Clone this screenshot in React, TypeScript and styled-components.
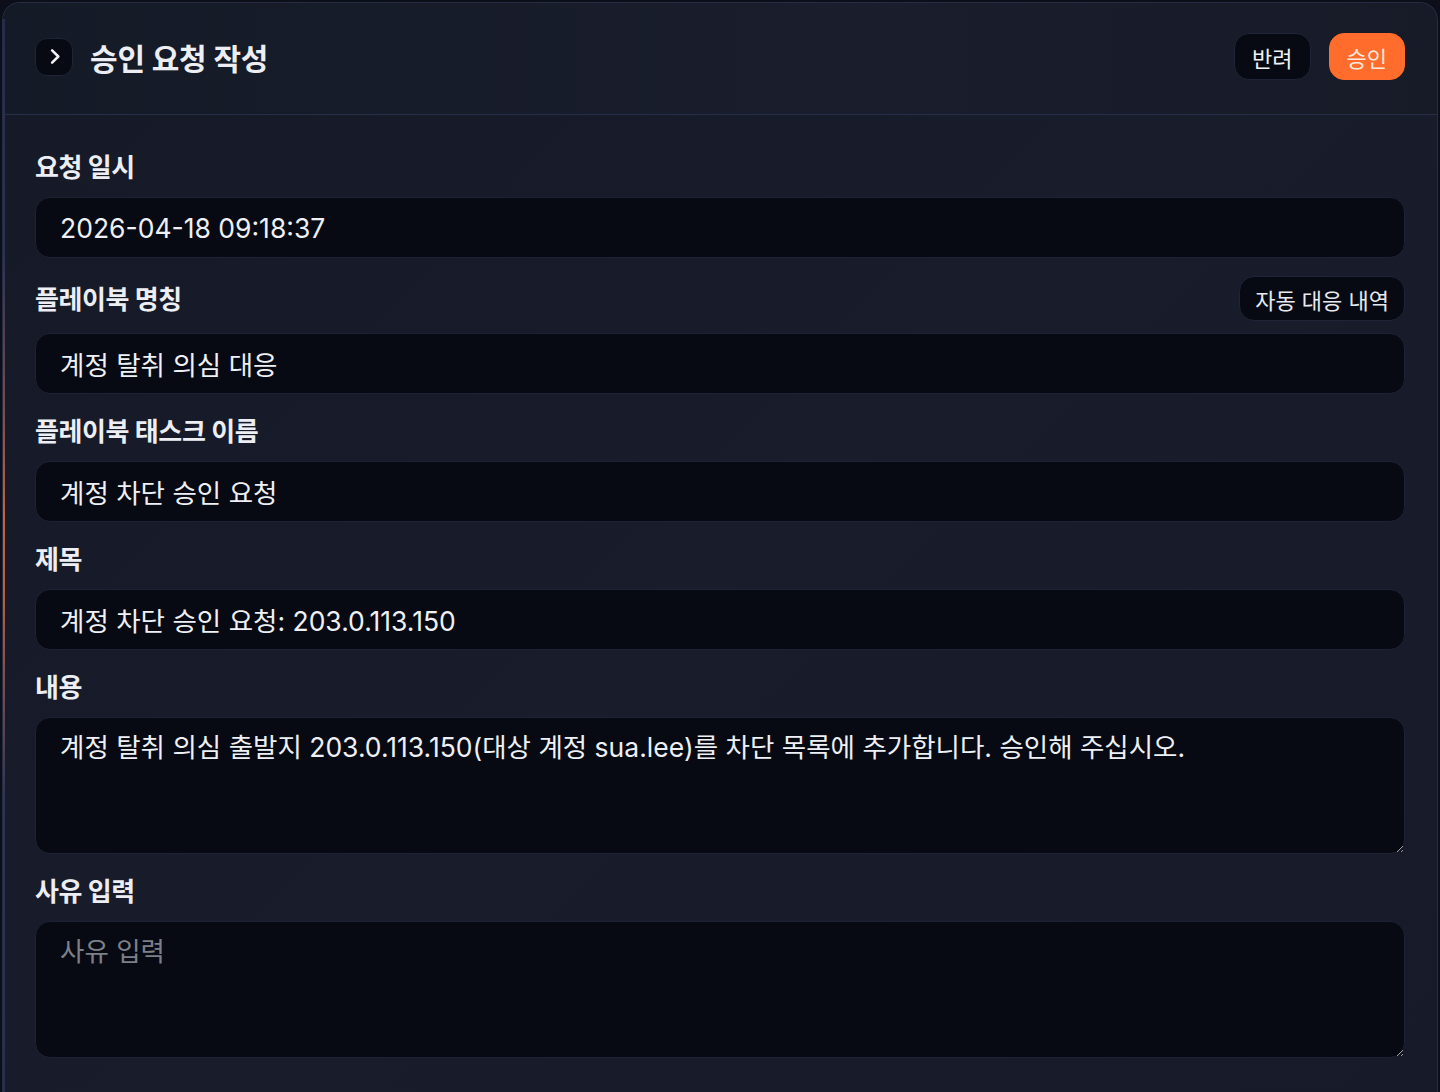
import styled, { createGlobalStyle } from "styled-components";

const GlobalStyle = createGlobalStyle`
  html, body {
    margin: 0;
    padding: 0;
    background: #0c0f19;
  }
  body {
    font-family: "Inter", "Noto Sans CJK KR", sans-serif;
    color: #eef0f5;
  }
  * { box-sizing: border-box; }
`;

const Panel = styled.section`
  position: relative;
  margin: 2px 2px 0 2px;
  min-height: calc(100vh - 2px);
  border: 1px solid #262c42;
  border-bottom: none;
  border-radius: 18px 18px 0 0;
  background: linear-gradient(135deg, #161a27 0%, #181c2b 50%, #171b29 100%);
  overflow: hidden;

  /* accent edge on the left */
  &::before {
    content: "";
    position: absolute;
    left: -1px;
    top: 16px;
    bottom: 0;
    width: 3px;
    background: linear-gradient(
      180deg,
      #262d4c 0%,
      #2c3256 22%,
      #7a4c4c 36%,
      #c8623a 46%,
      #c05e3c 53%,
      #7a4c4e 62%,
      #2d3456 72%,
      #283050 100%
    );
  }

  &::after {
    content: "";
    position: absolute;
    left: 40px;
    right: 200px;
    top: -1px;
    height: 1px;
    background: linear-gradient(90deg, transparent, #5a6388 40%, #4a5274 70%, transparent);
  }
`;

const Header = styled.header`
  display: flex;
  align-items: center;
  justify-content: space-between;
  height: 112px;
  padding: 0 32px 4px 32px;
  border-bottom: 1px solid #272e48;
  background: linear-gradient(90deg, #151a27 0%, #1a1e2c 60%, #171b28 100%);
`;

const TitleGroup = styled.div`
  display: flex;
  align-items: center;
  gap: 17px;
`;

const IconButton = styled.button`
  width: 38px;
  height: 38px;
  display: grid;
  place-items: center;
  border-radius: 12px;
  border: 1px solid #1f2537;
  background: #070a12;
  color: #f2f3f7;
  padding: 0;
  cursor: pointer;
`;

const Title = styled.h1`
  margin: 0;
  font-size: 30px;
  font-weight: 700;
  letter-spacing: -0.2px;
  color: #eceef3;
`;

const Actions = styled.div`
  display: flex;
  gap: 18px;
`;

const ActionButton = styled.button<{ $primary?: boolean }>`
  height: 47px;
  padding: 0 17px;
  border-radius: 15px;
  font-family: inherit;
  font-size: 22px;
  font-weight: 400;
  cursor: pointer;
  border: 1px solid ${(p) => (p.$primary ? "#ff6c2c" : "#1f2538")};
  background: ${(p) => (p.$primary ? "#ff6c2c" : "#070a12")};
  color: ${(p) => (p.$primary ? "#ffe9de" : "#f0f2f6")};
`;

const Body = styled.div`
  display: flex;
  flex-direction: column;
  gap: 18px;
  padding: 33px 32px 40px 32px;
`;

const Field = styled.div`
  display: flex;
  flex-direction: column;
  gap: 12px;
`;

const LabelRow = styled.div`
  display: flex;
  align-items: center;
  justify-content: space-between;
  min-height: 37px;
`;

const Label = styled.label`
  padding-top: 3px;
  font-size: 26px;
  font-weight: 700;
  line-height: 34px;
  color: #eceef3;
  letter-spacing: -0.4px;
`;

const SmallButton = styled.button`
  height: 45px;
  padding: 0 15px;
  border-radius: 15px;
  border: 1px solid #1f2538;
  background: #070a12;
  color: #e8eaf0;
  font-family: inherit;
  font-size: 22px;
  cursor: pointer;
`;

const Input = styled.input`
  width: 100%;
  height: 61px;
  padding: 0 24px;
  border-radius: 15px;
  border: 1px solid #1d2234;
  background: #070a12;
  color: #eef0f5;
  font-family: inherit;
  font-size: 26.5px;
  outline: none;
`;

const TextArea = styled.textarea`
  width: 100%;
  height: 137px;
  padding: 11px 24px;
  border-radius: 15px;
  border: 1px solid #1d2234;
  background: #070a12;
  color: #eef0f5;
  font-family: inherit;
  font-size: 26.5px;
  line-height: 36px;
  resize: vertical;
  outline: none;

  &::placeholder {
    color: #7d8089;
  }
`;

const ChevronRight = () => (
  <svg width="23" height="23" viewBox="0 0 24 24" fill="none" stroke="currentColor" strokeWidth="2.6" strokeLinecap="round" strokeLinejoin="round">
    <path d="M9.5 5.5l6.5 6.5-6.5 6.5" />
  </svg>
);

export default function App() {
  return (
    <>
      <GlobalStyle />
      <Panel>
        <Header>
          <TitleGroup>
            <IconButton type="button" aria-label="펼치기">
              <ChevronRight />
            </IconButton>
            <Title>승인 요청 작성</Title>
          </TitleGroup>
          <Actions>
            <ActionButton type="button">반려</ActionButton>
            <ActionButton type="button" $primary>
              승인
            </ActionButton>
          </Actions>
        </Header>
        <Body>
          <Field>
            <LabelRow>
              <Label>요청 일시</Label>
            </LabelRow>
            <Input readOnly value="2026-04-18 09:18:37" />
          </Field>
          <Field>
            <LabelRow>
              <Label>플레이북 명칭</Label>
              <SmallButton type="button">자동 대응 내역</SmallButton>
            </LabelRow>
            <Input readOnly value="계정 탈취 의심 대응" />
          </Field>
          <Field>
            <LabelRow>
              <Label>플레이북 태스크 이름</Label>
            </LabelRow>
            <Input readOnly value="계정 차단 승인 요청" />
          </Field>
          <Field>
            <LabelRow>
              <Label>제목</Label>
            </LabelRow>
            <Input readOnly value="계정 차단 승인 요청: 203.0.113.150" />
          </Field>
          <Field>
            <LabelRow>
              <Label>내용</Label>
            </LabelRow>
            <TextArea
              readOnly
              value="계정 탈취 의심 출발지 203.0.113.150(대상 계정 sua.lee)를 차단 목록에 추가합니다. 승인해 주십시오."
            />
          </Field>
          <Field>
            <LabelRow>
              <Label>사유 입력</Label>
            </LabelRow>
            <TextArea placeholder="사유 입력" />
          </Field>
        </Body>
      </Panel>
    </>
  );
}
